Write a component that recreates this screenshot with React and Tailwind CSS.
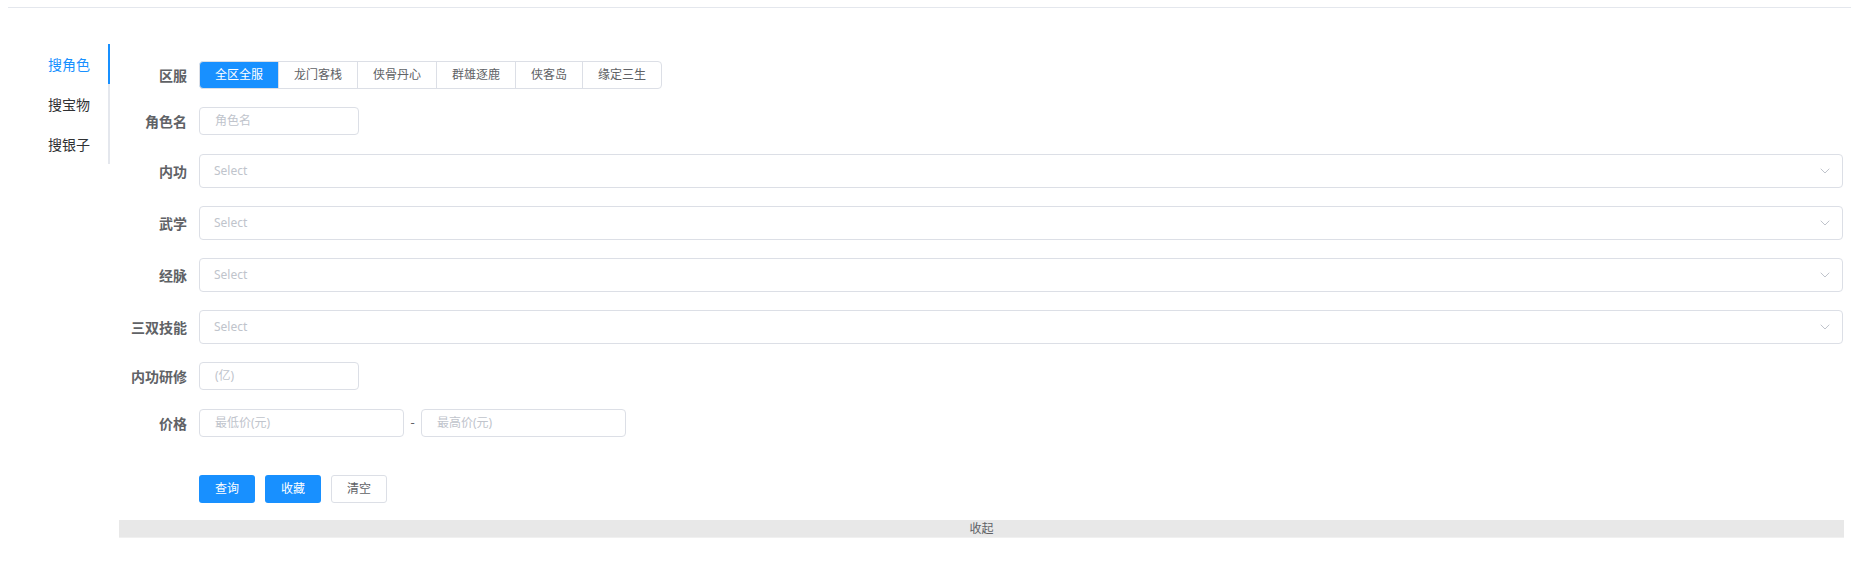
import { ChevronDown } from "lucide-react";

const servers = ["全区全服", "龙门客栈", "侠骨丹心", "群雄逐鹿", "侠客岛", "缘定三生"];
const tabs = ["搜角色", "搜宝物", "搜银子"];
const selects = ["内功", "武学", "经脉", "三双技能"];

function Label({ children }) {
    return (
        <div className="w-[80px] shrink-0 pr-[12px] text-right text-[14px] font-bold text-[#606266]">
            {children}
        </div>
    );
}

function TextInput({ placeholder, width }) {
    return (
        <div
            className={`${width} h-[28px] flex items-center border border-[#dcdfe6] rounded-[4px] px-[15px] text-[12px] text-[#c0c4cc]`}
        >
            {placeholder}
        </div>
    );
}

export default function App() {
    return (
        <div
            className="w-[1851px] h-[577px] bg-white"
            style={{ fontFamily: '"Noto Sans", "Noto Sans CJK SC", sans-serif' }}
        >
            <div className="ml-[8px] pt-[7px]">
                <div className="border-t border-[#e4e7ed]" />
            </div>

            <div className="flex">
                {/* 左侧标签 */}
                <div className="w-[110px] shrink-0 pt-[36px]">
                    {tabs.map((t, i) => (
                        <div
                            key={t}
                            className={`h-[40px] flex items-center justify-end pr-[18px] text-[14px] border-r-2 ${
                                i === 0 ? "border-[#1890ff] text-[#1890ff]" : "border-[#e4e7ed] text-[#303133]"
                            }`}
                        >
                            {t}
                        </div>
                    ))}
                </div>

                {/* 表单 */}
                <div className="flex-1 ml-[9px] mr-[7px] pt-[53px]">
                    <div className="flex items-center h-[28px]">
                        <Label>区服</Label>
                        <div className="flex">
                            {servers.map((s, i) => (
                                <div
                                    key={s}
                                    className={`h-[28px] flex items-center px-[15px] text-[12px] border border-[#dcdfe6] ${
                                        i > 0 ? "-ml-px" : ""
                                    } ${i === 0 ? "rounded-l-[4px] bg-[#1890ff] border-[#1890ff] text-white" : "text-[#606266]"} ${
                                        i === servers.length - 1 ? "rounded-r-[4px]" : ""
                                    }`}
                                >
                                    {s}
                                </div>
                            ))}
                        </div>
                    </div>

                    <div className="flex items-center h-[28px] mt-[18px]">
                        <Label>角色名</Label>
                        <TextInput placeholder="角色名" width="w-[160px]" />
                    </div>

                    {selects.map((s, i) => (
                        <div key={s} className={`flex items-center h-[34px] ${i === 0 ? "mt-[19px]" : "mt-[18px]"}`}>
                            <Label>{s}</Label>
                            <div className="flex-1 h-[34px] flex items-center justify-between border border-[#dcdfe6] rounded-[4px] pl-[14px] pr-[9px] mr-px text-[12px] text-[#c0c4cc]">
                                <span>Select</span>
                                <ChevronDown className="w-[16px] h-[16px]" strokeWidth={1.5} />
                            </div>
                        </div>
                    ))}

                    <div className="flex items-center h-[28px] mt-[18px]">
                        <Label>内功研修</Label>
                        <TextInput placeholder="(亿)" width="w-[160px]" />
                    </div>

                    <div className="flex items-center h-[28px] mt-[19px]">
                        <Label>价格</Label>
                        <TextInput placeholder="最低价(元)" width="w-[205px]" />
                        <span className="w-[17px] text-center text-[13px] text-[#606266]">-</span>
                        <TextInput placeholder="最高价(元)" width="w-[205px]" />
                    </div>

                    <div className="flex items-center h-[28px] mt-[38px] pl-[80px] gap-[10px]">
                        <button className="w-[56px] h-[28px] rounded-[3px] bg-[#1890ff] text-white text-[12px]">查询</button>
                        <button className="w-[56px] h-[28px] rounded-[3px] bg-[#1890ff] text-white text-[12px]">收藏</button>
                        <button className="w-[56px] h-[28px] rounded-[3px] border border-[#dcdfe6] bg-white text-[#606266] text-[12px]">
                            清空
                        </button>
                    </div>

                    <div className="mt-[17px] h-[18px] flex items-center justify-center bg-[#e8e8e8] border-b border-[#f0f0f0] text-[12px] text-[#606266]">
                        收起
                    </div>
                </div>
            </div>
        </div>
    );
}
